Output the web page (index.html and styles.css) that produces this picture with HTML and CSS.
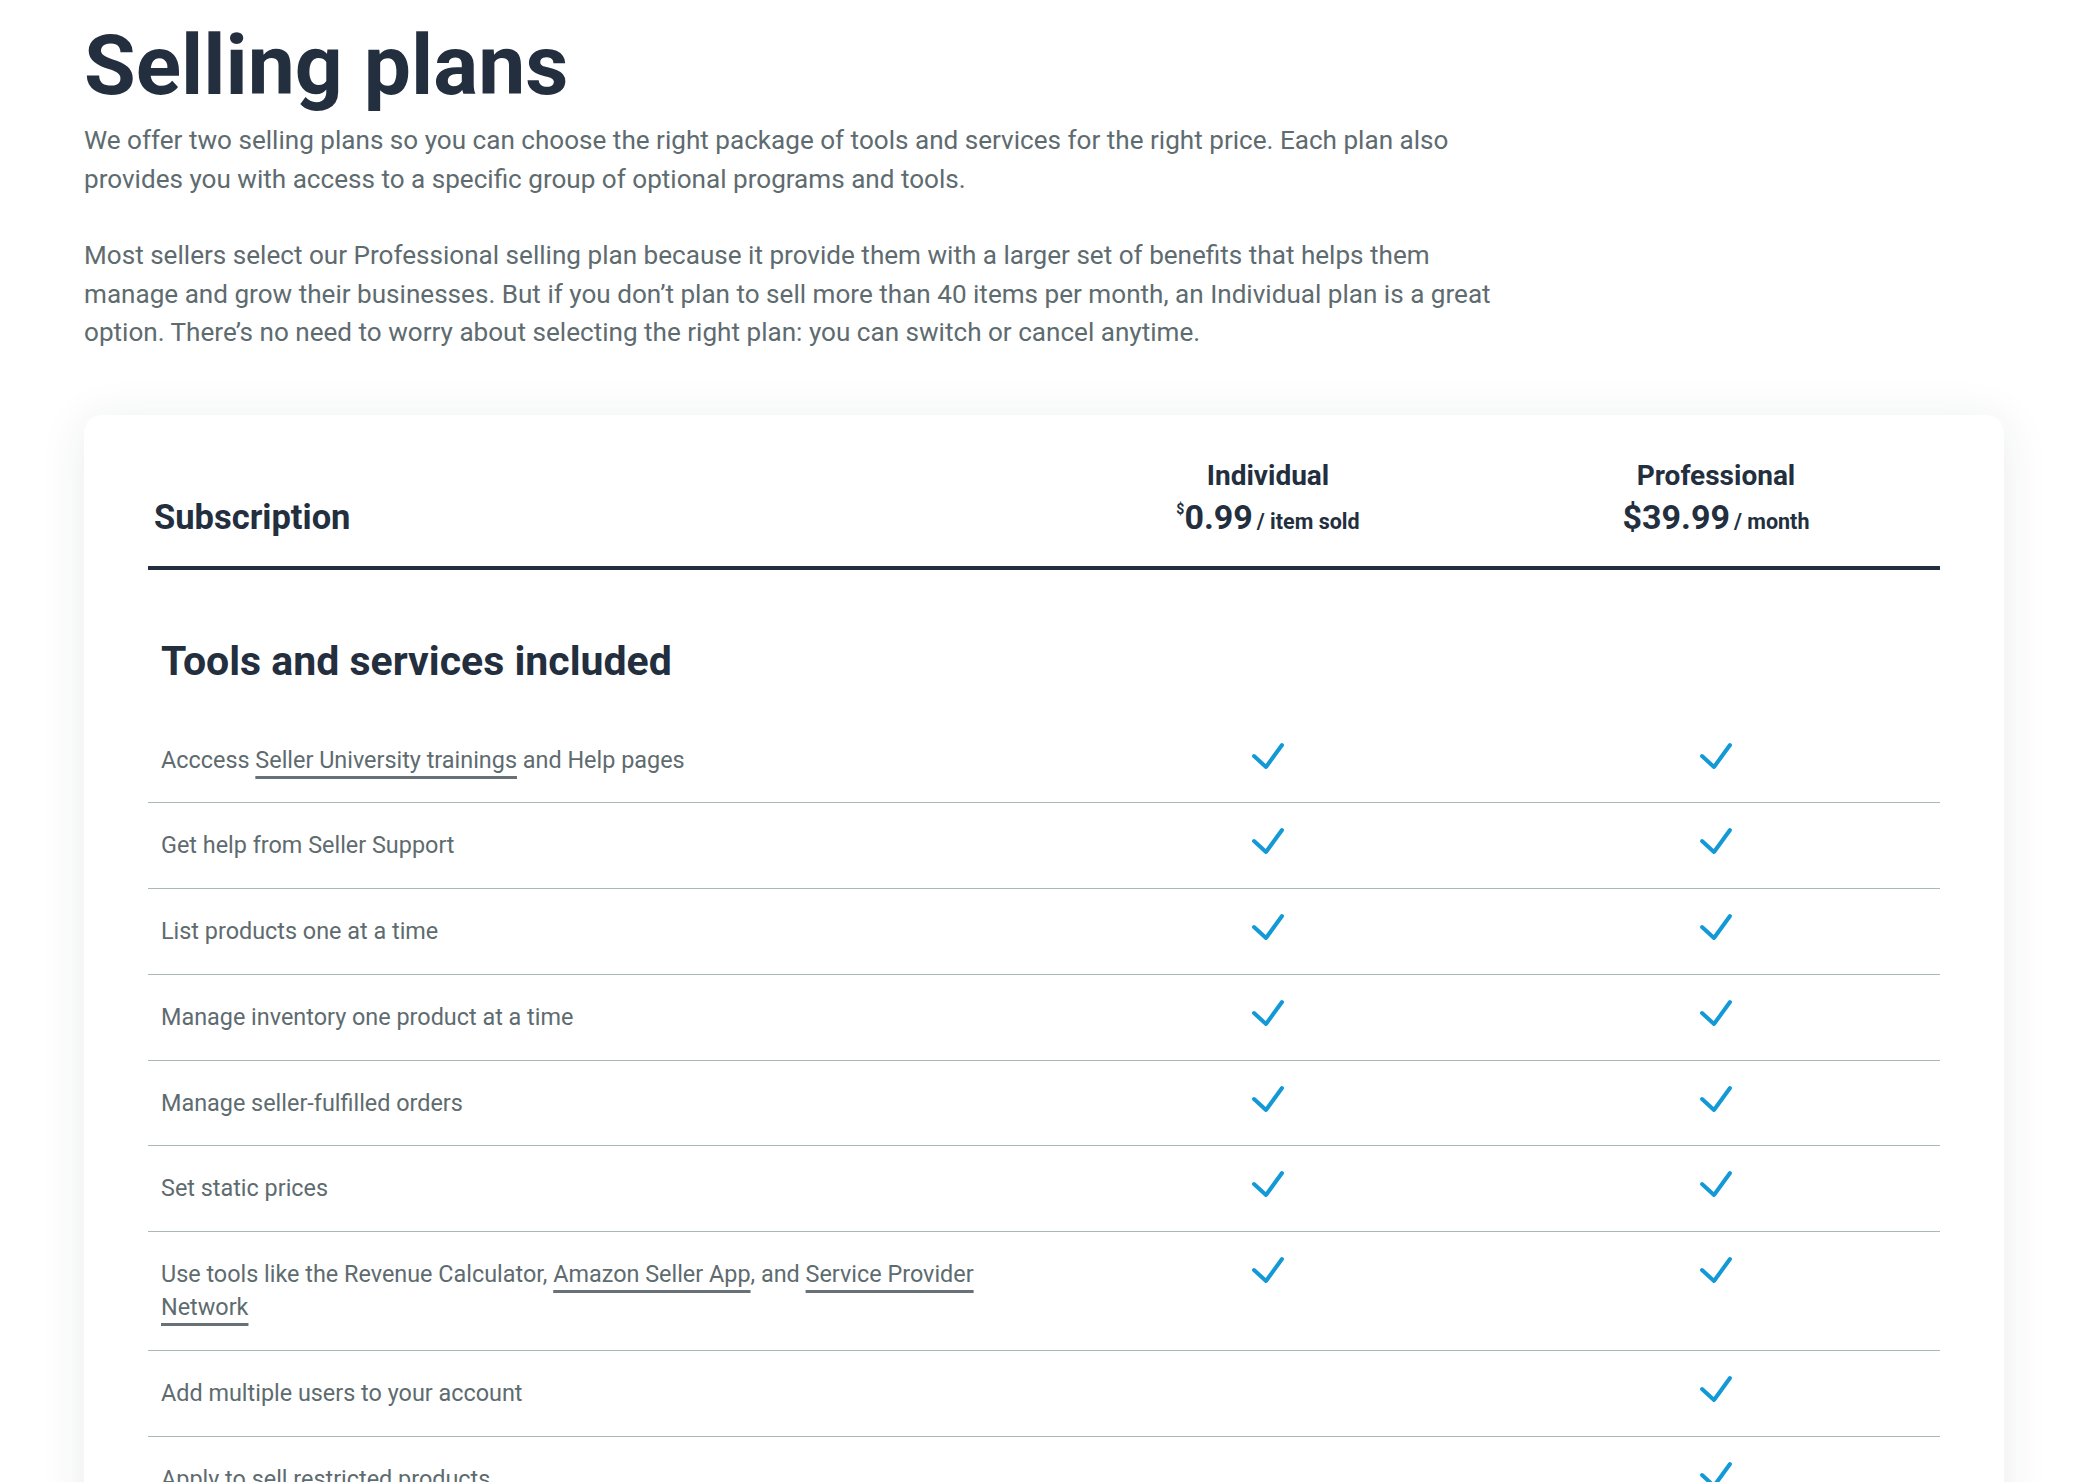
FILE: index.html
```html
<!DOCTYPE html>
<html lang="en">
<head>
<meta charset="utf-8">
<title>Selling plans</title>
<link rel="stylesheet" href="styles.css">
</head>
<body>
<main class="page">
  <h1 class="title">Selling plans</h1>
  <p class="lead">We offer two selling plans so you can choose the right package of tools and services for the right price. Each plan also provides you with access to a specific group of optional programs and tools.</p>
  <p class="lead">Most sellers select our Professional selling plan because it provide them with a larger set of benefits that helps them manage and grow their businesses. But if you don’t plan to sell more than 40 items per month, an Individual plan is a great option. There’s no need to worry about selecting the right plan: you can switch or cancel anytime.</p>

  <section class="card">
    <div class="head-row">
      <div class="head-label">Subscription</div>
      <div class="plan">
        <div class="plan-name">Individual</div>
        <div class="plan-price"><sup class="cur">$</sup><span class="amount">0.99</span> <span class="unit">/ item sold</span></div>
      </div>
      <div class="plan">
        <div class="plan-name">Professional</div>
        <div class="plan-price"><span class="amount">$39.99</span> <span class="unit">/ month</span></div>
      </div>
    </div>

    <h2 class="section-title">Tools and services included</h2>

    <div class="row">
      <div class="feature">Acccess <a class="link" href="#">Seller University trainings</a> and Help pages</div>
      <div class="mark"><svg class="check" viewBox="0 0 34 28"><path d="M3 14 L15 25 L31 3"/></svg></div>
      <div class="mark"><svg class="check" viewBox="0 0 34 28"><path d="M3 14 L15 25 L31 3"/></svg></div>
    </div>
    <div class="row">
      <div class="feature">Get help from Seller Support</div>
      <div class="mark"><svg class="check" viewBox="0 0 34 28"><path d="M3 14 L15 25 L31 3"/></svg></div>
      <div class="mark"><svg class="check" viewBox="0 0 34 28"><path d="M3 14 L15 25 L31 3"/></svg></div>
    </div>
    <div class="row">
      <div class="feature">List products one at a time</div>
      <div class="mark"><svg class="check" viewBox="0 0 34 28"><path d="M3 14 L15 25 L31 3"/></svg></div>
      <div class="mark"><svg class="check" viewBox="0 0 34 28"><path d="M3 14 L15 25 L31 3"/></svg></div>
    </div>
    <div class="row">
      <div class="feature">Manage inventory one product at a time</div>
      <div class="mark"><svg class="check" viewBox="0 0 34 28"><path d="M3 14 L15 25 L31 3"/></svg></div>
      <div class="mark"><svg class="check" viewBox="0 0 34 28"><path d="M3 14 L15 25 L31 3"/></svg></div>
    </div>
    <div class="row">
      <div class="feature">Manage seller-fulfilled orders</div>
      <div class="mark"><svg class="check" viewBox="0 0 34 28"><path d="M3 14 L15 25 L31 3"/></svg></div>
      <div class="mark"><svg class="check" viewBox="0 0 34 28"><path d="M3 14 L15 25 L31 3"/></svg></div>
    </div>
    <div class="row">
      <div class="feature">Set static prices</div>
      <div class="mark"><svg class="check" viewBox="0 0 34 28"><path d="M3 14 L15 25 L31 3"/></svg></div>
      <div class="mark"><svg class="check" viewBox="0 0 34 28"><path d="M3 14 L15 25 L31 3"/></svg></div>
    </div>
    <div class="row">
      <div class="feature narrow">Use tools like the Revenue Calculator, <a class="link" href="#">Amazon Seller App</a>, and <a class="link" href="#">Service Provider</a><br><a class="link" href="#">Network</a></div>
      <div class="mark"><svg class="check" viewBox="0 0 34 28"><path d="M3 14 L15 25 L31 3"/></svg></div>
      <div class="mark"><svg class="check" viewBox="0 0 34 28"><path d="M3 14 L15 25 L31 3"/></svg></div>
    </div>
    <div class="row">
      <div class="feature">Add multiple users to your account</div>
      <div class="mark"></div>
      <div class="mark"><svg class="check" viewBox="0 0 34 28"><path d="M3 14 L15 25 L31 3"/></svg></div>
    </div>
    <div class="row">
      <div class="feature">Apply to sell restricted products</div>
      <div class="mark"></div>
      <div class="mark"><svg class="check" viewBox="0 0 34 28"><path d="M3 14 L15 25 L31 3"/></svg></div>
    </div>
  </section>
</main>
</body>
</html>
```

FILE: styles.css
```css
* { box-sizing: border-box; }

html, body {
  margin: 0;
  padding: 0;
  background: #ffffff;
}

body {
  font-family: Roboto, "Liberation Sans", Arial, sans-serif;
  color: #5e6b6f;
}

.page {
  padding: 24px 78px 0 84px;
}

.title {
  margin: 0;
  font-size: 84px;
  line-height: 84px;
  font-weight: 700;
  color: #232f3e;
  letter-spacing: 0;
}

.lead {
  margin: 13px 0 38px;
  max-width: 1436px;
  font-size: 26.1px;
  line-height: 38.5px;
}

.lead + .lead {
  margin-top: 0;
}

.card {
  margin-top: 63px;
  background: #ffffff;
  border-radius: 18px;
  box-shadow: 0 6px 48px rgba(35, 47, 62, 0.09);
  padding: 44px 64px 40px;
}

.head-row {
  display: grid;
  grid-template-columns: 2fr 1fr 1fr;
  align-items: end;
  padding-bottom: 22px;
  border-bottom: 4px solid #232f3e;
  color: #232f3e;
}

.head-label {
  padding-left: 6px;
  padding-bottom: 7px;
  font-size: 34.5px;
  line-height: 40px;
  font-weight: 700;
}

.plan {
  text-align: center;
}

.plan-name {
  font-size: 28px;
  line-height: 34px;
  font-weight: 700;
}

.plan-price {
  margin-top: 4px;
  line-height: 40px;
  font-weight: 700;
}

.amount {
  font-size: 34px;
}

.cur {
  font-size: 14px;
  vertical-align: 15px;
  line-height: 0;
}

.unit {
  font-size: 21.5px;
}

.section-title {
  margin: 67px 0 33px;
  padding-left: 13px;
  font-size: 41px;
  line-height: 48px;
  font-weight: 700;
  color: #232f3e;
}

.row {
  display: grid;
  grid-template-columns: 2fr 1fr 1fr;
  border-bottom: 1px solid #aab7b8;
}

.feature {
  padding: 26px 13px 25.8px;
  font-size: 23.4px;
  line-height: 33px;
  color: #5e6b6f;
}

.feature.narrow {
  max-width: 860px;
}

.link {
  color: inherit;
  text-decoration: underline;
  text-decoration-color: #687078;
  text-decoration-thickness: 3px;
  text-underline-offset: 8px;
}

.mark {
  display: flex;
  justify-content: center;
  align-items: flex-start;
  padding-top: 24px;
}

.check {
  width: 34px;
  height: 28px;
  fill: none;
  stroke: #1399d6;
  stroke-width: 4;
  stroke-linecap: round;
  stroke-linejoin: round;
}
```
